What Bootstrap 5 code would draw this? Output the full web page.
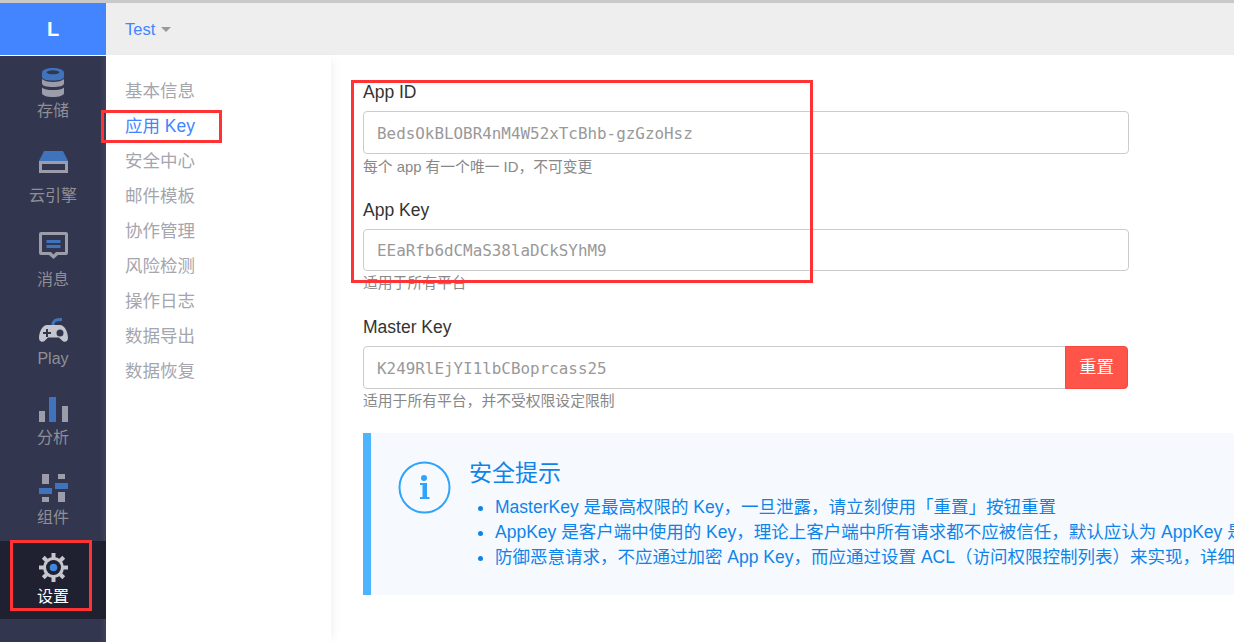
<!DOCTYPE html>
<html lang="en">
<head>
    <meta charset="UTF-8">
    <meta name="viewport" content="width=device-width, initial-scale=1.0">
    <title>应用 Key</title>
    <link href="https://cdn.jsdelivr.net/npm/bootstrap@5.3.0/dist/css/bootstrap.min.css" rel="stylesheet">
    <style>
        html, body {
            height: 642px;
            overflow: hidden;
        }

        body {
            font-family: "Liberation Sans", "Noto Sans CJK SC", sans-serif;
            font-size: 16px;
            color: #333;
            background: #fff;
            border-top: 3px solid #c9c9c9;
            position: relative;
        }

        .app-shell {
            height: 639px;
        }

        .side-rail {
            width: 106px;
            flex: none;
            background: #33364f;
            box-shadow: inset -6px 0 6px -4px rgba(255, 255, 255, .08);
        }

        .rail-logo {
            height: 53px;
            background: #4285ff;
            color: #fff;
            font-weight: 700;
            font-size: 20px;
            border-bottom: 1px solid #fff;
        }

        .rail-item {
            color: #8f8f96;
            font-size: 16px;
            line-height: 20px;
            text-decoration: none;
        }

        .rail-item svg {
            display: block;
        }

        .rail-item.is-active {
            background: #1f2030;
            color: #fff;
        }

        .ri-store { height: 84px; padding-top: 12px; }
        .ri-store svg { margin-bottom: 4px; }
        .ri-engine { height: 84px; padding-top: 11px; }
        .ri-engine svg { margin-bottom: 13px; }
        .ri-msg { height: 79px; padding-top: 8px; }
        .ri-msg svg { margin-bottom: 11px; }
        .ri-play { height: 79px; padding-top: 15px; }
        .ri-play svg { margin-bottom: 6px; }
        .ri-chart { height: 80px; padding-top: 15px; }
        .ri-chart svg { margin-bottom: 6px; }
        .ri-parts { height: 79px; padding-top: 12px; }
        .ri-parts svg { margin-bottom: 5px; }
        .ri-gear { height: 78px; padding-top: 12px; }
        .ri-gear svg { margin-bottom: 5px; }

        .top-strip {
            height: 52px;
            background: #eee;
            padding-left: 19px;
        }

        .app-switch {
            color: #4285ff;
            text-decoration: none;
            font-size: 16.5px;
            line-height: 20px;
        }

        .app-switch::after {
            content: "";
            display: inline-block;
            margin-left: 6px;
            vertical-align: 3px;
            border-top: 5px solid #999;
            border-left: 5px solid transparent;
            border-right: 5px solid transparent;
        }

        .sub-nav {
            width: 225px;
            flex: none;
            padding: 19px 0 0 19px;
            box-shadow: 6px 0 10px -4px rgba(0, 0, 0, .06);
        }

        .sub-nav a {
            display: block;
            height: 35px;
            line-height: 35px;
            font-size: 17.5px;
            color: #a5a5ad;
            text-decoration: none;
        }

        .sub-nav a.is-active {
            color: #4285ff;
        }

        .main-pane {
            padding: 26px 0 0 32px;
            overflow: hidden;
        }

        .key-form {
            width: 766px;
        }

        .field-label {
            display: block;
            height: 30px;
            line-height: 22px;
            font-size: 17.5px;
            color: #333;
            margin: 0;
        }

        .key-form .form-control {
            height: 43px;
            padding: 1px 13px 0;
            font-family: "DejaVu Sans Mono", monospace;
            font-size: 15.9px;
            color: #999;
            border-color: #ccc;
            border-radius: 4px;
            background: #fff;
        }

        .key-form .short-input {
            height: 42px;
        }

        .master-group {
            width: 765px;
        }

        .reset-btn {
            width: 63px;
            padding: 0;
            background: #ff5449;
            border: 1px solid #f5493e;
            color: #fff;
            font-size: 17.5px;
            border-radius: 0 4px 4px 0;
        }

        .field-help {
            height: 45px;
            padding-top: 2px;
            line-height: 20px;
            font-size: 14.8px;
            color: #888;
        }

        .help-first {
            padding-top: 3px;
        }

        .help-last {
            height: 44px;
        }

        .safety-box {
            width: 1000px;
            height: 162px;
            background: #f6faff;
            border-left: 8px solid #4db5ff;
            color: #0f84e8;
            padding: 28px 0 0 27px;
        }

        .safety-icon {
            flex: none;
            margin-right: 17px;
        }

        .safety-title {
            font-size: 23px;
            line-height: 24px;
            font-weight: 400;
            margin: 0 0 10px;
        }

        .safety-box ul {
            margin: 0;
            padding-left: 26px;
            font-size: 17.5px;
            line-height: 25px;
            white-space: nowrap;
        }

        .mark-box {
            position: absolute;
            border: 3px solid #ff3333;
            pointer-events: none;
        }

        .mark-rail { left: 10px; top: 537px; width: 82px; height: 71px; }
        .mark-nav { left: 101px; top: 107px; width: 121px; height: 33px; }
        .mark-form { left: 351px; top: 77px; width: 462px; height: 203px; }
    </style>
</head>
<body>
    <div class="d-flex app-shell">
        <nav class="side-rail d-flex flex-column">
            <div class="rail-logo d-flex align-items-center justify-content-center">L</div>
            <a class="rail-item ri-store d-flex flex-column align-items-center" href="#">
                <svg width="22" height="29" viewBox="0 0 22 29"><path d="M0 4.500C0 2 5 0 11 0s11 2 11 4.500V9c0 2.500-5 3.500-11 3.500S0 11.500 0 9z" fill="#3f74bd"/><ellipse cx="11" cy="4.300" rx="6.500" ry="2" fill="#33364f"/><path d="M0 11c2 2 6 3 11 3s9-1 11-3v4.500c0 2.500-5 3.500-11 3.500S0 18 0 15.500zM0 19.500c2 2 6 2.500 11 2.500s9-.5 11-2.500V25c0 2.500-5 4-11 4s-11-1.500-11-4z" fill="#9c9cab"/></svg>
                <span>存储</span>
            </a>
            <a class="rail-item ri-engine d-flex flex-column align-items-center" href="#">
                <svg width="30" height="22" viewBox="0 0 30 22"><path d="M6 0h19l5 10H1z" fill="#3f74bd"/><path d="M1 10h29v12H1zM4 13v6h23v-6z" fill="#9c9cab" fill-rule="evenodd"/></svg>
                <span>云引擎</span>
            </a>
            <a class="rail-item ri-msg d-flex flex-column align-items-center" href="#">
                <svg width="30" height="27" viewBox="0 0 30 27"><path d="M3 0h25a2 2 0 0 1 2 2v19a2 2 0 0 1-2 2h-8l-4.500 4-4.500-4H3a2 2 0 0 1-2-2V2a2 2 0 0 1 2-2zm1 3v17h9l2.500 2.500L18 20h9V3z" fill="#9c9cab" fill-rule="evenodd"/><path d="M8.500 8h14v3h-14zM8.500 13h14v3h-14z" fill="#3f74bd"/></svg>
                <span>消息</span>
            </a>
            <a class="rail-item ri-play d-flex flex-column align-items-center" href="#">
                <svg width="30" height="25" viewBox="0 0 30 25"><path d="M15 7c0-4 2-5.500 9-5.500" stroke="#3f74bd" stroke-width="3" fill="none"/><path d="M9 7h13c4.500 0 8 7 8 13 0 3.500-3.500 5-6 2.500l-3-3H10l-3 3C4.500 25 1 23.500 1 20 1 14 4.500 7 9 7z" fill="#c6c6cf"/><path d="M8 11v3H5v2h3v3h2v-3h3v-2h-3v-3z" fill="#33364f"/><circle cx="22" cy="15" r="3.500" fill="#33364f"/></svg>
                <span>Play</span>
            </a>
            <a class="rail-item ri-chart d-flex flex-column align-items-center" href="#">
                <svg width="30" height="25" viewBox="0 0 30 25"><path d="M1 14h6v11H1zM24 9h6v16h-6z" fill="#9c9cab"/><path d="M11 0h7v25h-7z" fill="#3f74bd"/></svg>
                <span>分析</span>
            </a>
            <a class="rail-item ri-parts d-flex flex-column align-items-center" href="#">
                <svg width="30" height="29" viewBox="0 0 30 29"><path d="M4 0h7v10H4zM4 23h7v5H4zM20 0h7v5h-7zM20 18h7v10h-7z" fill="#9c9cab"/><path d="M1 14h13v6H1zM17 9h13v6H17z" fill="#3f74bd"/></svg>
                <span>组件</span>
            </a>
            <a class="rail-item ri-gear is-active d-flex flex-column align-items-center" href="#">
                <svg width="29" height="29" viewBox="0 0 29 29"><circle cx="14.500" cy="14.500" r="10.500" fill="#c6c6cf"/><g fill="#c6c6cf"><path d="M12.500 0h4v5h-4zM12.500 24h4v5h-4zM0 12.500h5v4H0zM24 12.500h5v4h-5z"/><path d="M12.500 0h4v5h-4zM12.500 24h4v5h-4zM0 12.500h5v4H0zM24 12.500h5v4h-5z" transform="rotate(45 14.500 14.500)"/></g><circle cx="14.500" cy="14.500" r="7.500" fill="#1f2030"/><circle cx="14.500" cy="14.500" r="3.800" fill="#3f86e0"/></svg>
                <span>设置</span>
            </a>
        </nav>
        <div class="flex-grow-1 d-flex flex-column overflow-hidden">
            <div class="top-strip d-flex align-items-center">
                <a class="app-switch" href="#">Test</a>
            </div>
            <div class="d-flex flex-grow-1">
                <div class="sub-nav">
                    <a href="#">基本信息</a>
                    <a href="#" class="is-active">应用 Key</a>
                    <a href="#">安全中心</a>
                    <a href="#">邮件模板</a>
                    <a href="#">协作管理</a>
                    <a href="#">风险检测</a>
                    <a href="#">操作日志</a>
                    <a href="#">数据导出</a>
                    <a href="#">数据恢复</a>
                </div>
                <div class="main-pane flex-grow-1">
                    <div class="key-form">
                        <label class="field-label">App ID</label>
                        <input class="form-control" readonly value="BedsOkBLOBR4nM4W52xTcBhb-gzGzoHsz">
                        <div class="field-help help-first">每个 app 有一个唯一 ID，不可变更</div>
                        <label class="field-label">App Key</label>
                        <input class="form-control short-input" readonly value="EEaRfb6dCMaS38laDCkSYhM9">
                        <div class="field-help">适用于所有平台</div>
                        <label class="field-label">Master Key</label>
                        <div class="input-group master-group">
                            <input class="form-control" readonly value="K249RlEjYI1lbCBoprcass25">
                            <button class="btn reset-btn" type="button">重置</button>
                        </div>
                        <div class="field-help help-last">适用于所有平台，并不受权限设定限制</div>
                    </div>
                    <div class="safety-box d-flex">
                        <svg class="safety-icon" width="54" height="54" viewBox="0 0 54 54"><circle cx="26.500" cy="26.500" r="25" fill="none" stroke="#2fa4fb" stroke-width="2"/><circle cx="26" cy="17" r="3" fill="#2fa4fb"/><path d="M22 22h7v14h2.500v2H22v-2h2.500V24H22z" fill="#2fa4fb"/></svg>
                        <div>
                            <h4 class="safety-title">安全提示</h4>
                            <ul>
                                <li>MasterKey 是最高权限的 Key，一旦泄露，请立刻使用「重置」按钮重置</li>
                                <li>AppKey 是客户端中使用的 Key，理论上客户端中所有请求都不应被信任，默认应认为 AppKey 是公开的</li>
                                <li>防御恶意请求，不应通过加密 App Key，而应通过设置 ACL（访问权限控制列表）来实现，详细内容请参考文档</li>
                            </ul>
                        </div>
                    </div>
                </div>
            </div>
        </div>
    </div>
    <div class="mark-box mark-rail"></div>
    <div class="mark-box mark-nav"></div>
    <div class="mark-box mark-form"></div>
    <script src="https://cdn.jsdelivr.net/npm/bootstrap@5.3.0/dist/js/bootstrap.bundle.min.js"></script>
</body>
</html>
